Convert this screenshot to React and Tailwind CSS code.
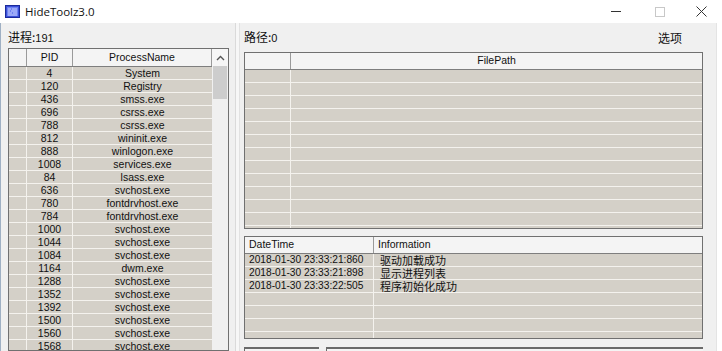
import React from "react";

const procs = [
  [4, "System"], [120, "Registry"], [436, "smss.exe"], [696, "csrss.exe"], [788, "csrss.exe"],
  [812, "wininit.exe"], [888, "winlogon.exe"], [1008, "services.exe"], [84, "lsass.exe"],
  [636, "svchost.exe"], [780, "fontdrvhost.exe"], [784, "fontdrvhost.exe"], [1000, "svchost.exe"],
  [1044, "svchost.exe"], [1084, "svchost.exe"], [1164, "dwm.exe"], [1288, "svchost.exe"],
  [1352, "svchost.exe"], [1392, "svchost.exe"], [1500, "svchost.exe"], [1560, "svchost.exe"],
  [1568, "svchost.exe"],
];

const logs = [
  ["2018-01-30 23:33:21:860", "驱动加载成功"],
  ["2018-01-30 23:33:21:898", "显示进程列表"],
  ["2018-01-30 23:33:22:505", "程序初始化成功"],
  ["", ""], ["", ""], ["", ""], ["", ""],
];

const sans = { fontFamily: '"Liberation Sans", Arial, "Noto Sans CJK SC", sans-serif' };
const cjk = { fontFamily: '"Noto Sans CJK SC", "Liberation Sans", sans-serif' };

function AppIcon() {
  return (
    <svg width="15" height="13" viewBox="0 0 15 13">
      <rect x="0.5" y="0.5" width="14" height="12" fill="#3a4fd8" stroke="#1b2a9a" />
      <rect x="2" y="2" width="11" height="9" fill="#6f82f0" />
      <path d="M3 4h3M7 4h5M3 6h2M6 6h6M3 8h4M8 8h4M3 10h9" stroke="#c8d0ff" strokeWidth="1" />
    </svg>
  );
}

export default function App() {
  return (
    <div
      className="w-[722px] h-[351px] overflow-hidden bg-[#f0f0f0] flex flex-col text-[#111]"
      style={sans}
    >
      {/* Title bar */}
      <div className="h-[23px] bg-white flex items-center shrink-0">
        <div className="ml-[5px] mt-[-1px] flex items-center">
          <AppIcon />
        </div>
        <span className="ml-[5px] text-[11.5px] text-[#111]" style={{ fontFamily: '"Open Sans", "Liberation Sans", sans-serif' }}>
          HideToolz3.0
        </span>
        <div className="ml-auto flex items-center h-full">
          <div className="w-[46px] h-full flex items-center justify-center">
            <div className="w-[10px] h-[1px] bg-[#333]" />
          </div>
          <div className="w-[42px] h-full flex items-center justify-center">
            <div className="w-[10px] h-[10px] border border-[#c8c8c8]" />
          </div>
          <div className="w-[40px] h-full flex items-center justify-center mr-[1px]">
            <svg width="11" height="11" viewBox="0 0 11 11">
              <path d="M0.5 0.5L10.5 10.5M10.5 0.5L0.5 10.5" stroke="#333" strokeWidth="1" />
            </svg>
          </div>
        </div>
      </div>

      {/* Body */}
      <div className="flex-1 flex min-h-0 border-l border-[#9fb0c4]">
        {/* Left panel */}
        <div className="w-[235px] shrink-0 flex flex-col pl-[7px] border-r border-[#dadada]">
          <div className="pt-[6px] h-[22px] shrink-0 leading-[16px] text-[12px]" style={cjk}>
            进程:<span style={sans} className="text-[11px]">191</span>
          </div>
          <div className="mt-[3px] w-[221px] border border-[#707070] flex overflow-hidden flex-1 items-start">
            <div className="flex flex-col w-[203px]">
              <div className="flex h-[18px] shrink-0 bg-[#f4f4f4] border-b border-[#7e7e7e] text-[10.5px]">
                <div className="w-[18px] border-r border-[#9a9a9a]" />
                <div className="w-[46px] border-r border-[#9a9a9a] flex items-center justify-center">PID</div>
                <div className="flex-1 border-r border-[#9a9a9a] flex items-center justify-center">ProcessName</div>
              </div>
              {procs.map(([pid, name], i) => (
                <div key={i} className="flex h-[13px] shrink-0 bg-[#d4d0c8] border-b border-[#f4f2ee] text-[10.5px] leading-[12px]">
                  <div className="w-[18px] border-r border-[#f4f2ee]" />
                  <div className="w-[46px] border-r border-[#f4f2ee] flex items-center justify-center">{pid}</div>
                  <div className="flex-1 flex items-center justify-center">{name}</div>
                </div>
              ))}
            </div>
            <div className="w-[16px] self-stretch flex flex-col bg-[#f0f0f0]">
              <div className="h-[17px] bg-[#f6f6f6] flex items-center justify-center">
                <svg width="9" height="6" viewBox="0 0 9 6">
                  <path d="M1 5L4.5 1.5L8 5" stroke="#555" strokeWidth="1.4" fill="none" />
                </svg>
              </div>
              <div className="h-[33px] mx-[1px] bg-[#cdcdcd]" />
            </div>
          </div>
        </div>

        {/* splitter */}
        <div className="w-[4px] shrink-0 bg-[#f7f7f7] border-r border-[#e2e2e2]" />

        {/* Right panel */}
        <div className="flex-1 flex flex-col pl-[4px] pr-[13px] min-w-0 overflow-hidden" style={cjk}>
          <div className="pt-[6px] h-[22px] shrink-0 flex justify-between leading-[16px] text-[12px]">
            <span>
              路径:<span style={sans} className="text-[11px]">0</span>
            </span>
            <span className="mr-[21px] mt-[1px]">选项</span>
          </div>

          {/* FilePath table */}
          <div className="mt-[7px] h-[177px] shrink-0 border border-[#707070] flex flex-col overflow-hidden" style={sans}>
            <div className="flex h-[17px] shrink-0 bg-[#f4f4f4] border-b border-[#7e7e7e] text-[10.5px]">
              <div className="w-[46px] border-r border-[#9a9a9a]" />
              <div className="flex-1 flex items-center justify-center">FilePath</div>
            </div>
            {Array.from({ length: 13 }).map((_, i) => (
              <div key={i} className="flex h-[13px] shrink-0 bg-[#d4d0c8] border-b border-[#f4f2ee]">
                <div className="w-[46px] border-r border-[#f4f2ee]" />
                <div className="flex-1" />
              </div>
            ))}
          </div>

          {/* Log table */}
          <div className="mt-[7px] h-[103px] shrink-0 border border-[#707070] flex flex-col overflow-hidden">
            <div className="flex h-[17px] shrink-0 bg-[#f4f4f4] border-b border-[#7e7e7e] text-[10.5px]" style={sans}>
              <div className="w-[129px] border-r border-[#9a9a9a] flex items-center pl-[4px]">DateTime</div>
              <div className="flex-1 flex items-center pl-[4px]">Information</div>
            </div>
            {logs.map(([t, info], i) => (
              <div key={i} className="flex h-[13px] shrink-0 bg-[#d4d0c8] border-b border-[#f4f2ee]">
                <div className="w-[129px] border-r border-[#f4f2ee] flex items-center pl-[4px] text-[10.2px] leading-[12px] whitespace-nowrap" style={sans}>{t}</div>
                <div className="flex-1 flex items-center pl-[6px] text-[11px] leading-[12px] whitespace-nowrap">{info}</div>
              </div>
            ))}
          </div>

          {/* Bottom controls */}
          <div className="mt-[8px] shrink-0 flex gap-[7px]">
            <div className="w-[75px] h-[10px] border-t-2 border-l border-[#6a6a6a] bg-[#f4f4f4]" />
            <div className="flex-1 h-[10px] border-t-2 border-l border-[#6a6a6a] bg-[#f4f4f4]" />
          </div>
        </div>

        {/* right window edge */}
        <div className="w-[6px] shrink-0 bg-white border-l border-[#e4e4e4]" />
      </div>
    </div>
  );
}
